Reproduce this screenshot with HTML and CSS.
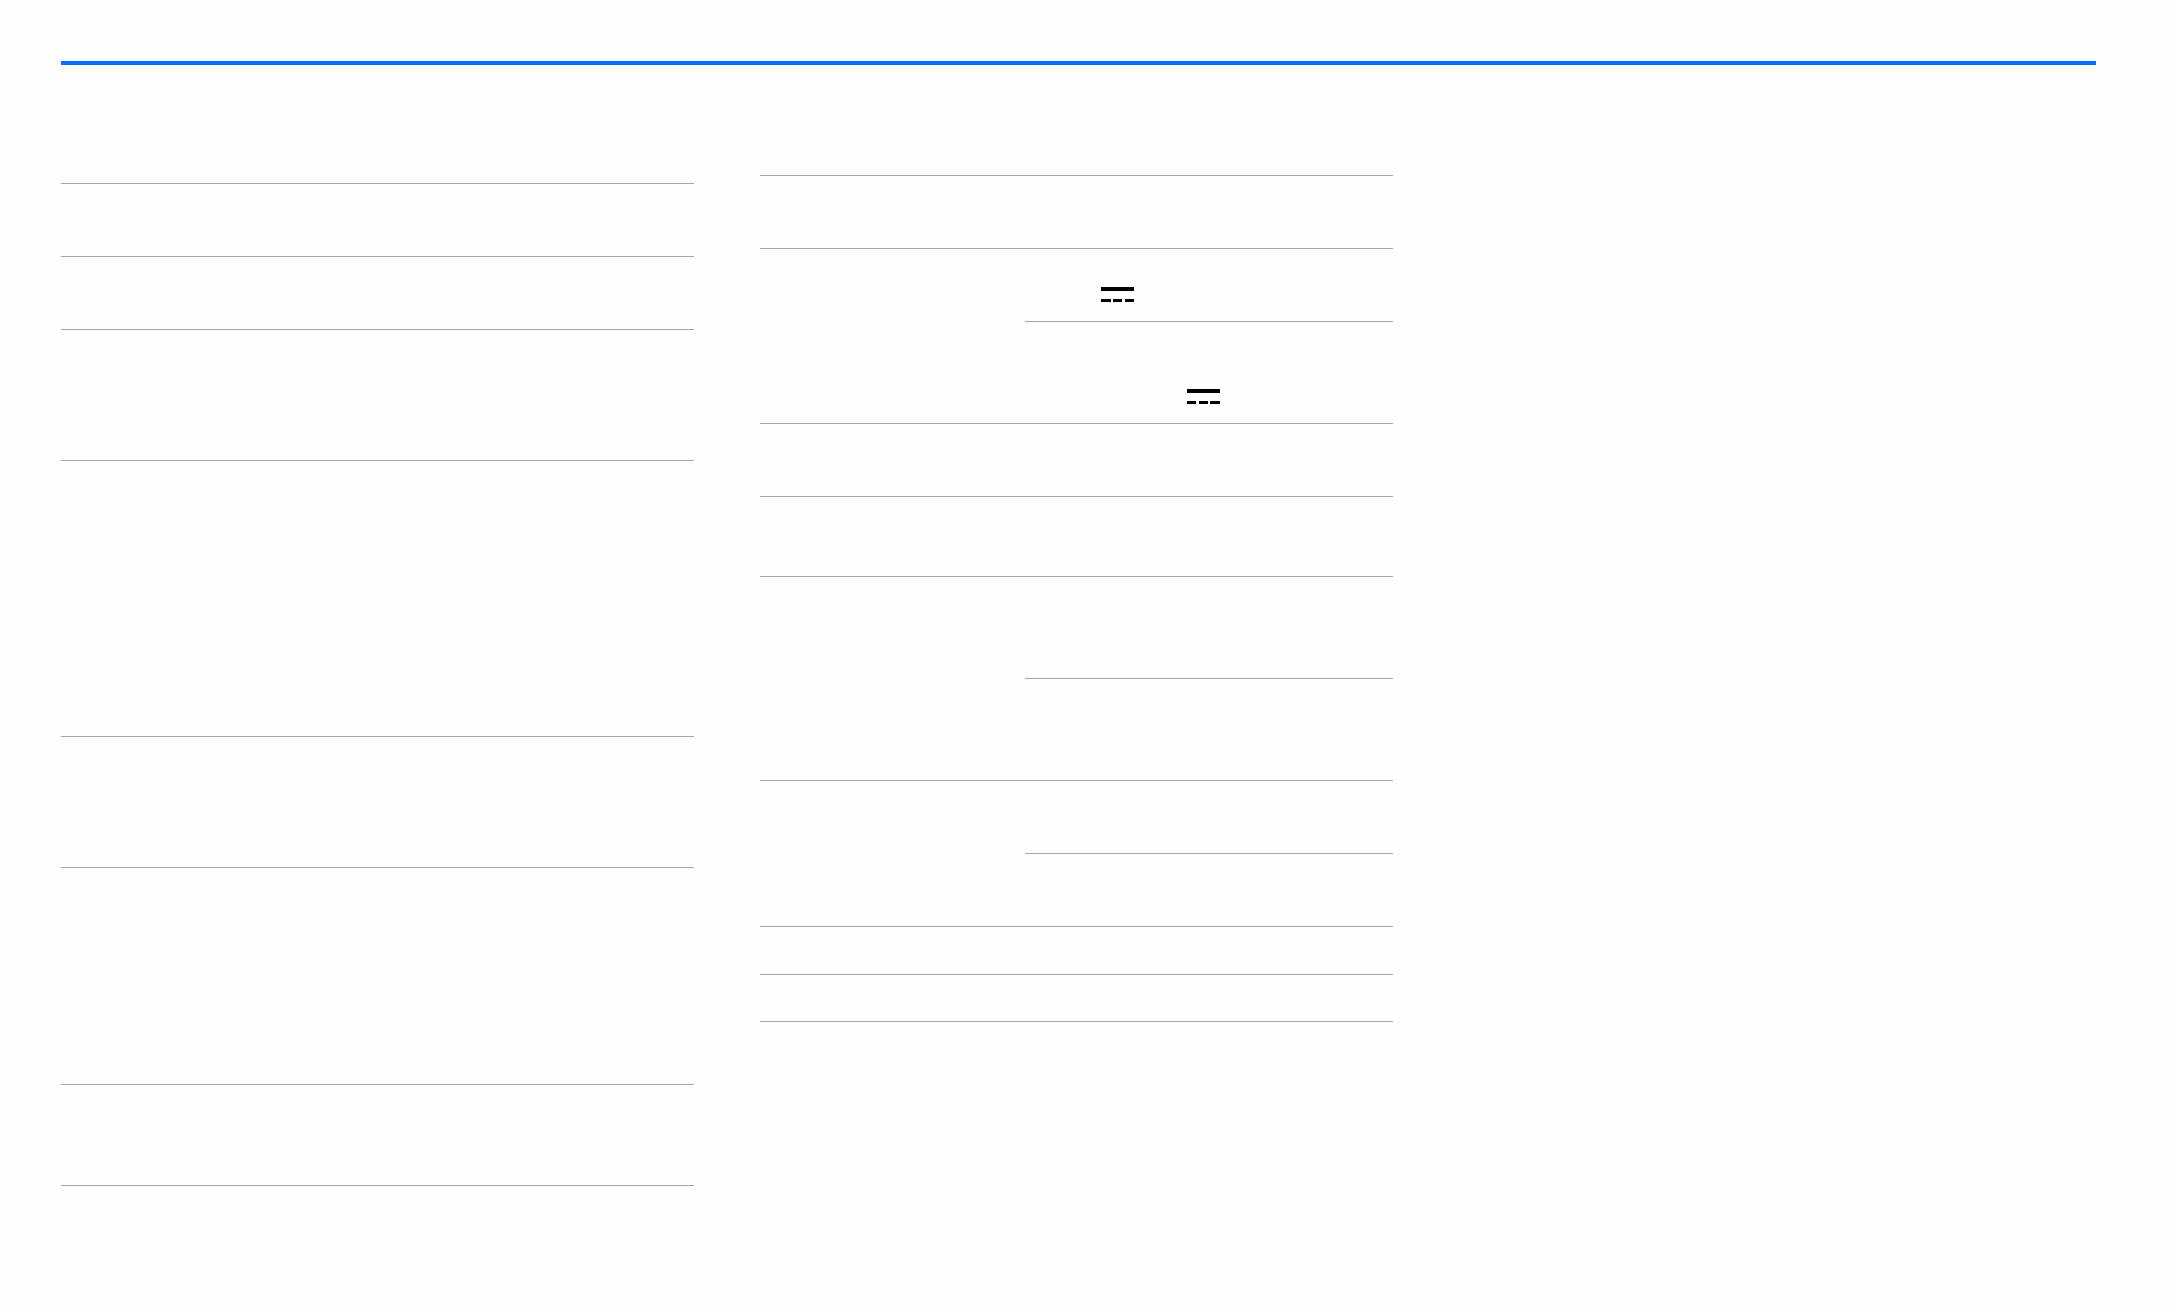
FILE: index.html
```html
<!DOCTYPE html>
<html lang="en">
<head>
<meta charset="utf-8">
<title>Specifications</title>
<link rel="stylesheet" href="styles.css">
</head>
<body>
<main class="sheet">
  <div class="rule"></div>
  <div class="columns">
    <section class="spec spec-left">
      <div class="row h73"></div>
      <div class="row h73"></div>
      <div class="row h131"></div>
      <div class="row h276"></div>
      <div class="row h131"></div>
      <div class="row h217"></div>
      <div class="row h101"></div>
    </section>
    <section class="spec spec-right">
      <div class="row h73"></div>
      <div class="row split">
        <div class="label"></div>
        <div class="values">
          <div class="value h72 icon-a">
            <svg class="dc" width="33" height="17" viewBox="0 0 33 17" aria-hidden="true"><rect width="33" height="4"/><rect y="12" width="10" height="3"/><rect x="12" y="12" width="9" height="3"/><rect x="24" y="12" width="9" height="3"/></svg>
          </div>
          <div class="value h102 icon-b">
            <svg class="dc" width="33" height="17" viewBox="0 0 33 17" aria-hidden="true"><rect width="33" height="4"/><rect y="12" width="9" height="3"/><rect x="12" y="12" width="9" height="3"/><rect x="23" y="12" width="10" height="3"/></svg>
          </div>
        </div>
      </div>
      <div class="row h73"></div>
      <div class="row h80"></div>
      <div class="row split">
        <div class="label"></div>
        <div class="values">
          <div class="value h101"></div>
          <div class="value h102"></div>
        </div>
      </div>
      <div class="row split">
        <div class="label"></div>
        <div class="values">
          <div class="value h72"></div>
          <div class="value h73"></div>
        </div>
      </div>
      <div class="row h48"></div>
      <div class="row h47"></div>
    </section>
  </div>
</main>
</body>
</html>
```
FILE: styles.css
```css
html, body {
  margin: 0;
  padding: 0;
  background: #fefefe;
}

.sheet {
  box-sizing: border-box;
  width: 2176px;
  height: 1306px;
  padding: 61px 80px 0 61px;
  overflow: hidden;
}

.rule {
  height: 4px;
  background: #006fff;
}

.columns {
  display: flex;
  align-items: flex-start;
  gap: 66px;
}

.spec {
  width: 633px;
  border-bottom: 1px solid #a6a6a6;
}

.spec-left {
  margin-top: 118px;
}

.spec-right {
  margin-top: 110px;
}

.row {
  box-sizing: border-box;
  border-top: 1px solid #a6a6a6;
}

.split {
  display: flex;
}

.label {
  flex: 0 0 265px;
}

.values {
  flex: 1;
}

.value {
  box-sizing: border-box;
}

.value + .value {
  border-top: 1px solid #a6a6a6;
}

.h47 { height: 47px; }
.h48 { height: 48px; }
.h72 { height: 72px; }
.h73 { height: 73px; }
.h80 { height: 80px; }
.h101 { height: 101px; }
.h102 { height: 102px; }
.h131 { height: 131px; }
.h217 { height: 217px; }
.h276 { height: 276px; }

.dc {
  display: block;
  fill: #000;
}

.icon-a {
  padding: 38px 0 0 76px;
}

.icon-b {
  padding: 67px 0 0 162px;
}
```
